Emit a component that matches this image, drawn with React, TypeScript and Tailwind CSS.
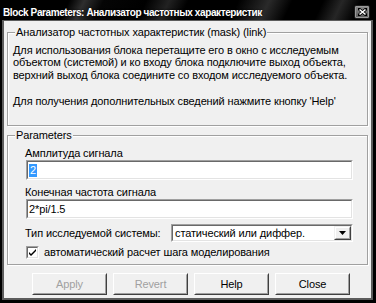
import React from "react";

function GroupBox({
  label,
  className,
  children,
}: {
  label: string;
  className?: string;
  children?: React.ReactNode;
}) {
  return (
    <div
      className={
        "relative border border-[#a0a0a0] shadow-[1px_1px_0_#ffffff,inset_1px_1px_0_#ffffff] " +
        (className ?? "")
      }
    >
      <span className="absolute left-[7px] top-[-7px] h-[13px] leading-[13px] px-[1px] bg-[#f0f0f0] whitespace-nowrap">
        {label}
      </span>
      {children}
    </div>
  );
}

function Sunken({ className, children }: { className?: string; children?: React.ReactNode }) {
  return (
    <div
      className={
        "border border-t-[#a0a0a0] border-l-[#a0a0a0] border-b-white border-r-white " + (className ?? "")
      }
    >
      <div className="h-full border border-t-[#696969] border-l-[#696969] border-b-[#e3e3e3] border-r-[#e3e3e3] bg-white">
        {children}
      </div>
    </div>
  );
}

function Button({ label, disabled }: { label: string; disabled?: boolean }) {
  return (
    <div className="w-[75px] h-[22px] border border-t-white border-l-white border-b-[#404040] border-r-[#404040] bg-[#f0f0f0]">
      <div
        className={
          "h-full flex items-center justify-center border border-t-[#f0f0f0] border-l-[#f0f0f0] border-b-[#a0a0a0] border-r-[#a0a0a0] " +
          (disabled ? "text-[#a0a0a0]" : "text-black")
        }
      >
        {label}
      </div>
    </div>
  );
}

export default function App() {
  return (
    <div className="w-[376px] h-[303px] flex flex-col bg-black font-['Liberation_Sans',Arial,sans-serif] text-[11px] tracking-[-0.12px] text-black overflow-hidden">
      {/* Title bar */}
      <div className="h-[20px] shrink-0 flex items-center justify-between pl-[3px] pr-[6px] bg-[linear-gradient(115deg,#000_0%,#000_18%,#2e2e2e_22%,#050505_27%,#000_38%,#222_44%,#000_49%,#000_62%,#2a2a2a_70%,#000_76%,#000_84%,#262626_89%,#000_94%)]">
        <span className="text-white font-bold text-[10px] tracking-[-0.4px] pt-[4px] whitespace-nowrap [text-shadow:0_0_2px_#000]">
          Block Parameters: Анализатор частотных характеристик
        </span>
        <div className="mt-[4px] w-[16px] h-[14px] rounded-[2px] border border-[#1a1a1a] bg-[linear-gradient(#8a8a8a,#5a5a5a)] shadow-[inset_0_0_0_1px_#9a9a9a] flex items-center justify-center">
          <svg width="9" height="8" viewBox="0 0 9 8">
            <path d="M1 1 L8 7 M8 1 L1 7" stroke="#000" strokeWidth="3" strokeLinecap="square" />
            <path d="M1.5 1.5 L7.5 6.5 M7.5 1.5 L1.5 6.5" stroke="#fff" strokeWidth="1.6" />
          </svg>
        </div>
      </div>

      {/* Window frame */}
      <div className="flex-1 flex flex-col pl-[2px] pr-[3px] pb-[3px]">
        <div className="flex-1 flex flex-col border-l-2 border-r-2 border-b-2 border-t border-[#5c5c5c] bg-[#f0f0f0] px-[3px] pt-[11px]">
          <GroupBox label="Анализатор частотных характеристик (mask) (link)" className="h-[94px] shrink-0">
            <div className="pl-[5px] pt-[11px] leading-[12.3px] whitespace-nowrap">
              <div>Для использования блока перетащите его в окно с исследуемым</div>
              <div>объектом (системой) и ко входу блока подключите выход объекта,</div>
              <div>верхний выход блока соедините со входом исследуемого объекта.</div>
              <div className="mt-[14.5px]">Для получения дополнительных сведений нажмите кнопку 'Help'</div>
            </div>
          </GroupBox>

          <GroupBox label="Parameters" className="mt-[9px] h-[130px] shrink-0">
            <div className="flex flex-col pl-[17px] pr-[14px] pt-[11px]">
              <div className="h-[13px] leading-[13px]">Амплитуда сигнала</div>
              <Sunken className="ml-[1px] h-[20px]">
                <div className="h-full flex items-center pl-[1px]">
                  <span className="bg-[#3399ff] text-white leading-[13px] px-[1px]">2</span>
                </div>
              </Sunken>
              <div className="mt-[6px] h-[13px] leading-[13px]">Конечная частота сигнала</div>
              <Sunken className="ml-[1px] h-[20px]">
                <div className="h-full flex items-center pl-[1px]">2*pi/1.5</div>
              </Sunken>
              <div className="mt-[5px] flex items-center h-[18px]">
                <span className="w-[146px] whitespace-nowrap">Тип исследуемой системы:</span>
                <Sunken className="flex-1 h-[18px]">
                  <div className="h-full flex items-center">
                    <span className="flex-1 pl-[2px] whitespace-nowrap">статический или диффер.</span>
                    <div className="w-[17px] h-full border border-t-[#f0f0f0] border-l-[#f0f0f0] border-b-[#404040] border-r-[#404040] bg-[#f0f0f0]">
                      <div className="h-full flex items-center justify-center border border-t-white border-l-white border-b-[#a0a0a0] border-r-[#a0a0a0]">
                        <svg width="7" height="4" viewBox="0 0 7 4">
                          <path d="M0 0 H7 L3.5 4 Z" fill="#000" />
                        </svg>
                      </div>
                    </div>
                  </div>
                </Sunken>
              </div>
              <div className="mt-[4px] flex items-center h-[13px]">
                <Sunken className="w-[13px] h-[13px] ml-[1px]">
                  <div className="h-full flex items-center justify-center">
                    <svg width="7" height="7" viewBox="0 0 7 7">
                      <path d="M0 3 L0 5 L2 7 L7 2 L7 0 L2 5 Z" fill="#000" />
                    </svg>
                  </div>
                </Sunken>
                <span className="ml-[5px] whitespace-nowrap">автоматический расчет шага моделирования</span>
              </div>
            </div>
          </GroupBox>

          <div className="mt-[8px] flex gap-[6px] pl-[25px]">
            <Button label="Apply" disabled />
            <Button label="Revert" disabled />
            <Button label="Help" />
            <Button label="Close" />
          </div>
        </div>
      </div>
    </div>
  );
}
